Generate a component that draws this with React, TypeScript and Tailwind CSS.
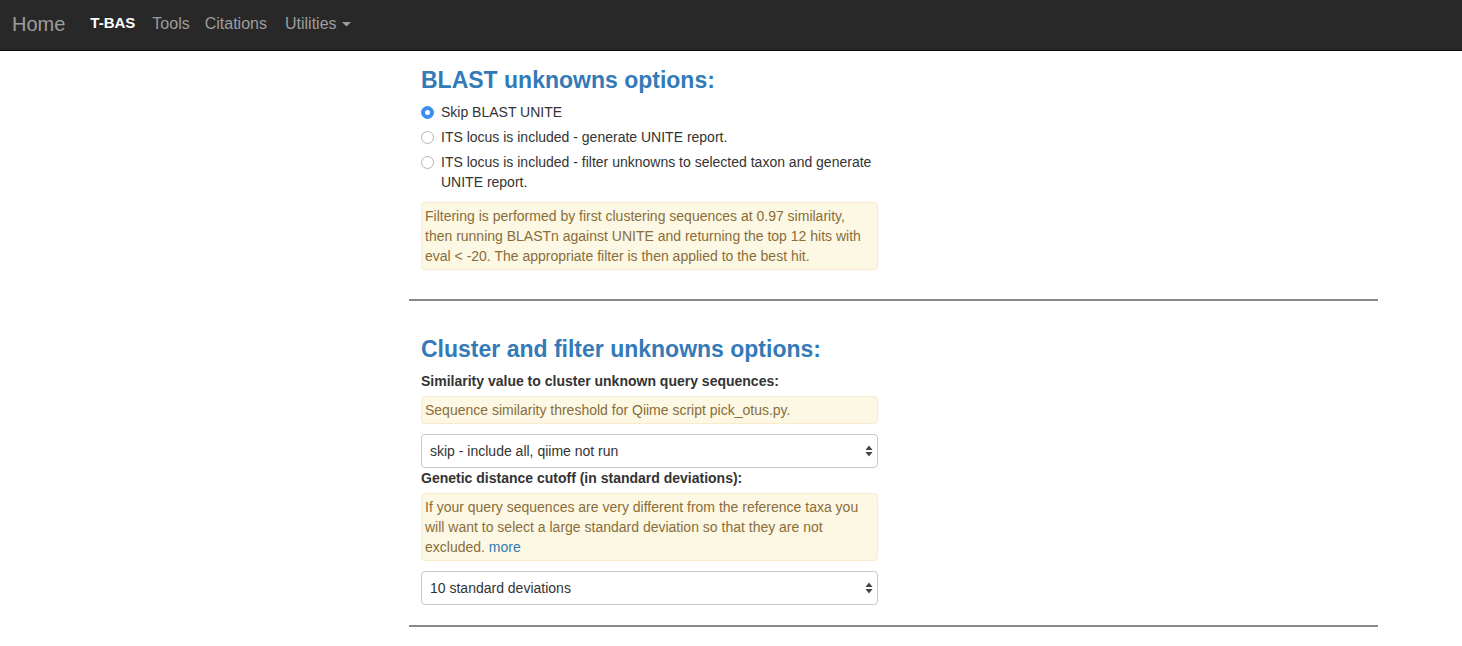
import React, { useState } from 'react';

const font = { fontFamily: '"Liberation Sans", Arial, sans-serif' };

function Radio({ checked, onClick }: { checked: boolean; onClick: () => void }) {
  return (
    <span
      onClick={onClick}
      className={[
        'mt-[4px] w-[13px] h-[13px] rounded-full shrink-0 flex items-center justify-center cursor-pointer',
        checked ? 'bg-[#3b8ef0] border border-[#3b8ef0]' : 'bg-white border border-[#b4b4b4]',
      ].join(' ')}
    >
      {checked && <span className="w-[5px] h-[5px] rounded-full bg-white" />}
    </span>
  );
}

function Alert({ children, className = '' }: { children: React.ReactNode; className?: string }) {
  return (
    <div className={`bg-[#fcf8e3] border border-[#faebcc] text-[#8a6d3b] rounded-[4px] px-[3px] py-[3px] leading-[20px] ${className}`}>
      {children}
    </div>
  );
}

function Select({ value, options }: { value: string; options: string[] }) {
  return (
    <div className="relative">
      <select
        defaultValue={value}
        className="appearance-none w-full h-[34px] bg-white border border-[#c8c8c8] rounded-[4px] pl-[8px] pr-6 text-[14px] text-[#333] outline-none"
        style={font}
      >
        {options.map(o => <option key={o}>{o}</option>)}
      </select>
      <svg className="absolute right-[5px] top-[11px] pointer-events-none" width="8" height="12" viewBox="0 0 8 12">
        <path d="M4 0.5 L7.5 5 L0.5 5 Z" fill="#444" />
        <path d="M4 11.5 L7.5 7 L0.5 7 Z" fill="#444" />
      </svg>
    </div>
  );
}

export default function App() {
  const [blast, setBlast] = useState(0);

  const radios = [
    'Skip BLAST UNITE',
    'ITS locus is included - generate UNITE report.',
    'ITS locus is included - filter unknowns to selected taxon and generate UNITE report.',
  ];

  return (
    <div className="min-h-screen bg-white text-[#333] text-[14px]" style={font}>
      {/* Navbar */}
      <nav className="h-[51px] bg-[#282828] border-b border-[#080808] flex items-center pb-[3px]">
        <span className="ml-[12px] text-[20px] text-[#9d9d9d]">Home</span>
        <span className="ml-[25px] text-[15px] font-bold text-white">T-BAS</span>
        <span className="ml-[17px] text-[16px] text-[#9d9d9d]">Tools</span>
        <span className="ml-[15px] text-[16px] text-[#9d9d9d]">Citations</span>
        <span className="ml-[18px] text-[16px] text-[#9d9d9d] flex items-center">
          Utilities
          <svg className="ml-[5px] mt-[1px]" width="9" height="5" viewBox="0 0 9 5">
            <path d="M0 0 L9 0 L4.5 4.5 Z" fill="#9d9d9d" />
          </svg>
        </span>
      </nav>

      <div className="pl-[409px] w-[1378px]">
        {/* BLAST section */}
        <div className="pl-[12px] w-[469px] pt-[16px]">
          <h3 className="text-[23px] font-bold text-[#337ab7] leading-[26px]">BLAST unknowns options:</h3>
          <div className="mt-[9px] flex flex-col gap-[5px]">
            {radios.map((r, i) => (
              <label key={i} className="flex gap-[7px] leading-[20px] cursor-pointer" onClick={() => setBlast(i)}>
                <Radio checked={blast === i} onClick={() => setBlast(i)} />
                <span>{r}</span>
              </label>
            ))}
          </div>
          <Alert className="mt-[10px]">
            Filtering is performed by first clustering sequences at 0.97 similarity, then running BLASTn against UNITE and returning the top 12 hits with eval &lt; -20. The appropriate filter is then applied to the best hit.
          </Alert>
        </div>

        <hr className="mt-[29px] border-0 h-[2px] bg-[#888]" />

        {/* Cluster section */}
        <div className="pl-[12px] w-[469px] pt-[35px]">
          <h3 className="text-[23px] font-bold text-[#337ab7] leading-[26px]">Cluster and filter unknowns options:</h3>
          <div className="mt-[9px] font-bold leading-[20px]">Similarity value to cluster unknown query sequences:</div>
          <Alert className="mt-[5px]">Sequence similarity threshold for Qiime script pick_otus.py.</Alert>
          <div className="mt-[10px]">
            <Select value="skip - include all, qiime not run" options={['skip - include all, qiime not run', '0.99', '0.97', '0.95']} />
          </div>
          <div className="font-bold leading-[20px]">Genetic distance cutoff (in standard deviations):</div>
          <Alert className="mt-[5px]">
            If your query sequences are very different from the reference taxa you will want to select a large standard deviation so that they are not excluded. <a className="text-[#337ab7] cursor-pointer">more</a>
          </Alert>
          <div className="mt-[10px]">
            <Select value="10 standard deviations" options={['1 standard deviation', '5 standard deviations', '10 standard deviations']} />
          </div>
        </div>

        <hr className="mt-[20px] border-0 h-[2px] bg-[#888]" />
      </div>
    </div>
  );
}
